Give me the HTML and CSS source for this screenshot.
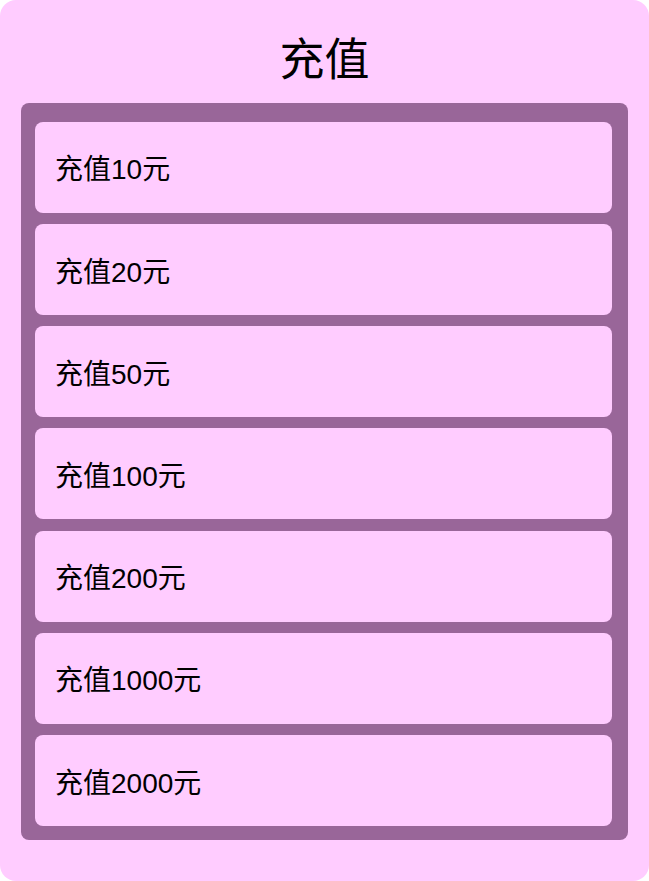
FILE: index.html
```html
<!DOCTYPE html>
<html lang="zh">
<head>
<meta charset="utf-8">
<title>充值</title>
<link rel="stylesheet" href="styles.css">
</head>
<body>
<div class="page">
  <h1 class="title">充值</h1>
  <div class="panel">
    <div class="item">充值10元</div>
    <div class="item">充值20元</div>
    <div class="item">充值50元</div>
    <div class="item">充值100元</div>
    <div class="item">充值200元</div>
    <div class="item">充值1000元</div>
    <div class="item">充值2000元</div>
  </div>
</div>
</body>
</html>
```
FILE: styles.css
```css
html, body {
  margin: 0;
  padding: 0;
  background: #ffffff;
}
body {
  font-family: "Liberation Sans", "Noto Sans CJK SC", sans-serif;
  color: #000;
}
.page {
  width: 649px;
  height: 881px;
  box-sizing: border-box;
  background: #ffccff;
  border-radius: 16px;
  padding: 0 21px 41px;
  display: flex;
  flex-direction: column;
}
.title {
  margin: 0;
  height: 103px;
  display: flex;
  align-items: center;
  justify-content: center;
  font-size: 45px;
  font-weight: normal;
  padding-top: 10px;
  box-sizing: border-box;
}
.panel {
  background: #996699;
  border-radius: 8px;
  padding: 19px 16px 14px 14px;
  display: flex;
  flex-direction: column;
  gap: 11.2px;
}
.item {
  background: #ffccff;
  border-radius: 8px;
  height: 91px;
  display: flex;
  align-items: center;
  padding-left: 20px;
  font-size: 28px;
}
```
